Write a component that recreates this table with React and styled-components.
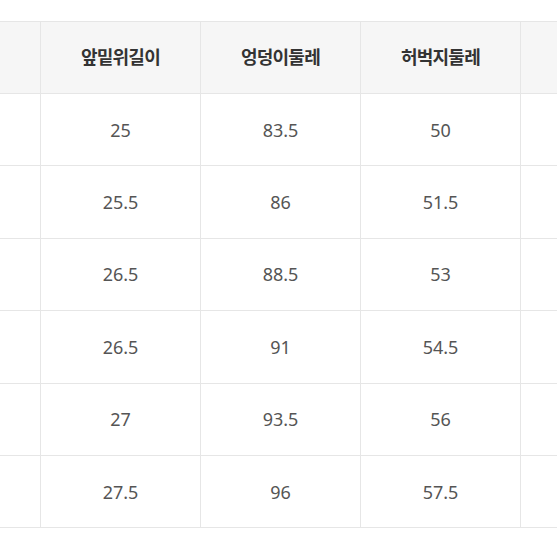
import React from 'react';
import styled, { createGlobalStyle } from 'styled-components';

const GlobalStyle = createGlobalStyle`
  html, body {
    margin: 0;
    padding: 0;
    background: #fff;
    overflow: hidden;
  }
`;

// 양 끝 열은 화면 밖으로 잘려서 내용이 보이지 않음
const columns = ['', '앞밑위길이', '엉덩이둘레', '허벅지둘레', ''];

const rows = [
  ['', '25', '83.5', '50', ''],
  ['', '25.5', '86', '51.5', ''],
  ['', '26.5', '88.5', '53', ''],
  ['', '26.5', '91', '54.5', ''],
  ['', '27', '93.5', '56', ''],
  ['', '27.5', '96', '57.5', ''],
];

const App = () => (
  <>
    <GlobalStyle />
    <Page>
      <SizeTable>
        <thead>
          <tr>
            {columns.map((c, i) => (
              <HeadCell key={i}>{c}</HeadCell>
            ))}
          </tr>
        </thead>
        <tbody>
          {rows.map((r, ri) => (
            <tr key={ri}>
              {r.map((v, i) => (
                <Cell key={i}>{v}</Cell>
              ))}
            </tr>
          ))}
        </tbody>
      </SizeTable>
    </Page>
  </>
);

const Page = styled.div`
  width: 557px;
  height: 557px;
  overflow: hidden;
  padding-top: 21px;
  box-sizing: border-box;
`;

const SizeTable = styled.table`
  border-collapse: collapse;
  table-layout: fixed;
  width: 801px;
  margin-left: -120px;
  font-family: "Noto Sans", "Noto Sans CJK KR", sans-serif;
`;

const HeadCell = styled.th`
  height: 72px;
  padding: 0 0 3px;
  box-sizing: border-box;
  background: #f6f6f6;
  border: 1px solid #e6e6e6;
  color: #333;
  font-family: "Noto Sans CJK KR", sans-serif;
  font-size: 18px;
  font-weight: 700;
  letter-spacing: -0.8px;
  text-align: center;
  vertical-align: middle;
`;

const Cell = styled.td`
  height: 72.4px;
  padding: 0;
  box-sizing: border-box;
  border: 1px solid #e6e6e6;
  color: #555;
  font-size: 18px;
  text-align: center;
  vertical-align: middle;
`;

export default App;
